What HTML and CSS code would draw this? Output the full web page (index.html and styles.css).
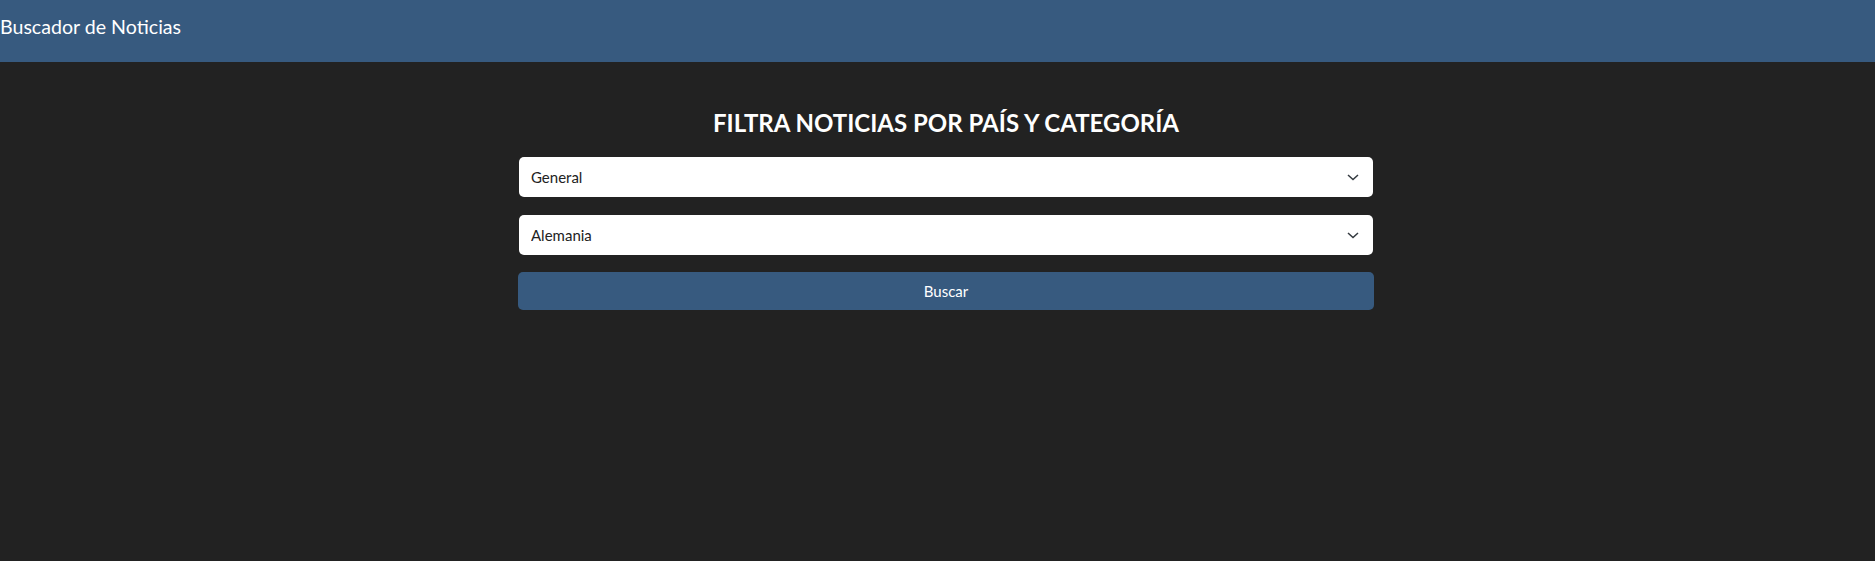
FILE: index.html
```html
<!DOCTYPE html>
<html lang="es">
<head>
<meta charset="utf-8">
<title>Buscador de Noticias</title>
<link rel="stylesheet" href="styles.css">
</head>
<body>
<header class="topbar">
  <h1 class="brand">Buscador de Noticias</h1>
</header>
<main class="container">
  <h2 class="title">FILTRA NOTICIAS POR PAÍS Y CATEGORÍA</h2>
  <form class="filters">
    <div class="select-wrap">
      <select class="field">
        <option>General</option>
      </select>
      <svg class="chev" width="12" height="7" viewBox="0 0 12 7"><path d="M1 1 L6 5.5 L11 1" fill="none" stroke="#343a40" stroke-width="1.5"/></svg>
    </div>
    <div class="select-wrap">
      <select class="field">
        <option>Alemania</option>
      </select>
      <svg class="chev" width="12" height="7" viewBox="0 0 12 7"><path d="M1 1 L6 5.5 L11 1" fill="none" stroke="#343a40" stroke-width="1.5"/></svg>
    </div>
    <button type="button" class="btn">Buscar</button>
  </form>
</main>
</body>
</html>
```
FILE: styles.css
```css
* { box-sizing: border-box; }
html, body {
  margin: 0;
  background: #222222;
  font-family: Lato, "Open Sans", sans-serif;
  color: #fff;
}
.topbar {
  background: #375a7f;
  height: 62px;
  padding-top: 12px;
}
.brand {
  margin: 0;
  font-size: 19.6px;
  font-weight: 400;
  line-height: 30px;
  color: #fff;
}
.container {
  width: 856px;
  margin-left: calc(50% - 419.5px);
  padding-top: 46px;
}
.title {
  margin: 0 0 19px;
  text-align: center;
  font-size: 24px;
  font-weight: 700;
  line-height: 30px;
  color: #fff;
}
.filters {
  display: flex;
  flex-direction: column;
}
.select-wrap {
  position: relative;
  margin: 0 1px 18px;
}
.field {
  display: block;
  width: 100%;
  height: 40px;
  appearance: none;
  -webkit-appearance: none;
  border: none;
  border-radius: 5px;
  background: #fff;
  padding: 0 36px 0 12px;
  font-family: Lato, sans-serif;
  font-size: 15px;
  color: #222;
}
.chev {
  position: absolute;
  right: 14px;
  top: 17px;
  pointer-events: none;
}
.btn {
  display: block;
  width: 100%;
  height: 38px;
  margin-top: -1px;
  border: none;
  border-radius: 5px;
  background: #375a7f;
  color: #fff;
  font-family: Lato, sans-serif;
  font-size: 15px;
}
```
